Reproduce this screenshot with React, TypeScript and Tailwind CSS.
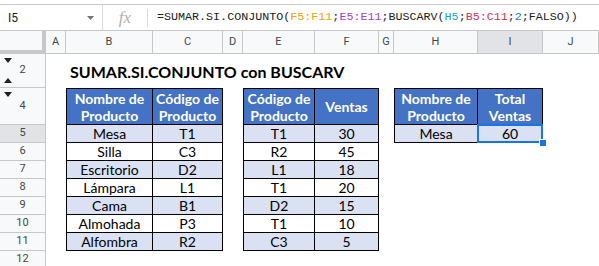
import React from "react";

const colLetters = ["A", "B", "C", "D", "E", "F", "G", "H", "I", "J"];

const t1 = [
  ["Mesa", "T1"],
  ["Silla", "C3"],
  ["Escritorio", "D2"],
  ["Lámpara", "L1"],
  ["Cama", "B1"],
  ["Almohada", "P3"],
  ["Alfombra", "R2"],
];
const t2 = [
  ["T1", "30"],
  ["R2", "45"],
  ["L1", "18"],
  ["T1", "20"],
  ["D2", "15"],
  ["T1", "10"],
  ["C3", "5"],
];

function Down() {
  return (
    <svg width="8" height="5" viewBox="0 0 8 5">
      <path d="M0 0 L8 0 L4 5 Z" fill="#202124" />
    </svg>
  );
}
function Up() {
  return (
    <svg width="8" height="5" viewBox="0 0 8 5">
      <path d="M0 5 L8 5 L4 0 Z" fill="#202124" />
    </svg>
  );
}

function HeaderCell({ children, first }: { children: React.ReactNode; first?: boolean }) {
  return (
    <div
      className={`flex items-center justify-center text-center bg-[#4472c4] text-white font-bold border-t border-r border-b border-black leading-[17px] ${
        first ? "border-l" : ""
      }`}
    >
      {children}
    </div>
  );
}

function DataCell({ children, first, alt }: { children: React.ReactNode; first?: boolean; alt?: boolean }) {
  return (
    <div
      className={`flex items-center justify-center border-r border-b border-black leading-none ${
        alt ? "bg-[#d9e1f2]" : "bg-white"
      } ${first ? "border-l" : ""}`}
    >
      {children}
    </div>
  );
}

export default function App() {
  const rowLabels: { label: string; top?: boolean; bottom?: boolean; sel?: boolean }[] = [
    { label: "2", top: true, bottom: true },
    { label: "4", top: true },
    { label: "5", sel: true },
    { label: "6" },
    { label: "7" },
    { label: "8" },
    { label: "9" },
    { label: "10" },
    { label: "11" },
    { label: "12" },
  ];

  return (
    <div className="w-[599px] h-[266px] overflow-hidden bg-white flex flex-col" style={{ fontFamily: "Roboto, 'Liberation Sans', sans-serif" }}>
      {/* formula bar */}
      <div className="pt-[4px] shrink-0">
        <div className="h-[27px] border-t border-b border-[#c7c7c7] flex items-center">
          <div className="w-[103px] h-full flex items-center justify-between pl-[8px] pr-[8px] border-r border-[#dadce0]">
            <span className="text-[12px] text-[#202124]">I5</span>
            <svg width="7" height="4" viewBox="0 0 7 4">
              <path d="M0 0 L7 0 L3.5 4 Z" fill="#757575" />
            </svg>
          </div>
          <div className="w-[44px] h-full flex items-center justify-center">
            <span className="text-[#b0b0b0] italic text-[17px]" style={{ fontFamily: "'Liberation Serif', serif" }}>
              fx
            </span>
          </div>
          <div className="w-px h-[18px] bg-[#dadce0]" />
          <div
            className="pl-[9px] text-[11.7px] text-[#202124] whitespace-nowrap"
            style={{ fontFamily: "'Liberation Mono', 'DejaVu Sans Mono', monospace" }}
          >
            =SUMAR.SI.CONJUNTO(<span className="text-[#f4a100]">F5:F11</span>;
            <span className="text-[#a142c4]">E5:E11</span>;BUSCARV(
            <span className="text-[#12a5c7]">H5</span>;<span className="text-[#d2305e]">B5:C11</span>;
            <span className="text-[#1a73e8]">2</span>;FALSO))
          </div>
        </div>
      </div>

      {/* sheet grid */}
      <div className="flex-1 grid grid-cols-[46px_20px_87px_70px_20px_72px_64px_15px_84px_65px_1fr] grid-rows-[23px_34px_37px_18px_18px_18px_18px_18px_18px_18px_18px_1fr]">
        {/* corner */}
        <div className="col-start-1 row-start-1 bg-[#f8f9fa] border-r-[4px] border-b-[4px] border-[#c7c7c7]" />
        {colLetters.map((c, i) => (
          <div
            key={c}
            className={`row-start-1 flex items-center justify-center text-[11px] text-[#444746] border-b border-r border-[#c7c7c7] ${
              c === "I" ? "bg-[#e1e3e6]" : "bg-[#f8f9fa]"
            }`}
            style={{ gridColumnStart: i + 2 }}
          >
            {c}
          </div>
        ))}

        {/* row headers */}
        {rowLabels.map((r, i) => (
          <div
            key={r.label}
            className={`col-start-1 relative flex items-center justify-center text-[11px] text-[#444746] border-r border-b border-[#c7c7c7] ${
              r.sel ? "bg-[#e1e3e6]" : "bg-[#f8f9fa]"
            }`}
            style={{ gridRowStart: i + 2 }}
          >
            {r.top && (
              <div className="absolute left-[4px] top-[4px] leading-none flex">
                <Down />
              </div>
            )}
            {r.bottom && (
              <div className="absolute left-[4px] bottom-[4px] leading-none flex">
                <Up />
              </div>
            )}
            {r.label}
          </div>
        ))}

        {/* title */}
        <div
          className="col-start-3 col-end-10 row-start-2 flex items-center pl-[4px] pt-[2px] text-[16px] font-bold text-black whitespace-nowrap"
          style={{ fontFamily: "Lato, 'Liberation Sans', sans-serif" }}
        >
          SUMAR.SI.CONJUNTO con BUSCARV
        </div>

        {/* table 1 */}
        <div
          className="col-start-3 col-end-5 row-start-3 row-end-11 grid grid-cols-[87px_70px] grid-rows-[37px_repeat(7,18px)] text-[14px] text-black"
          style={{ fontFamily: "Lato, 'Liberation Sans', sans-serif" }}
        >
          <HeaderCell first>
            Nombre de
            <br />
            Producto
          </HeaderCell>
          <HeaderCell>
            Código de
            <br />
            Producto
          </HeaderCell>
          {t1.map((r, i) => (
            <React.Fragment key={i}>
              <DataCell first alt={i % 2 === 0}>
                {r[0]}
              </DataCell>
              <DataCell alt={i % 2 === 0}>{r[1]}</DataCell>
            </React.Fragment>
          ))}
        </div>

        {/* table 2 */}
        <div
          className="col-start-6 col-end-8 row-start-3 row-end-11 grid grid-cols-[72px_64px] grid-rows-[37px_repeat(7,18px)] text-[14px] text-black"
          style={{ fontFamily: "Lato, 'Liberation Sans', sans-serif" }}
        >
          <HeaderCell first>
            Código de
            <br />
            Producto
          </HeaderCell>
          <HeaderCell>Ventas</HeaderCell>
          {t2.map((r, i) => (
            <React.Fragment key={i}>
              <DataCell first alt={i % 2 === 0}>
                {r[0]}
              </DataCell>
              <DataCell alt={i % 2 === 0}>{r[1]}</DataCell>
            </React.Fragment>
          ))}
        </div>

        {/* table 3 */}
        <div
          className="col-start-9 col-end-11 row-start-3 row-end-5 grid grid-cols-[84px_65px] grid-rows-[37px_18px] text-[14px] text-black"
          style={{ fontFamily: "Lato, 'Liberation Sans', sans-serif" }}
        >
          <HeaderCell first>
            Nombre de
            <br />
            Producto
          </HeaderCell>
          <HeaderCell>
            Total
            <br />
            Ventas
          </HeaderCell>
          <DataCell first alt>
            Mesa
          </DataCell>
          <div className="relative flex items-center justify-center bg-[#d9e1f2] border-r border-b border-black">
            60
            <div className="absolute inset-[-1px] border-2 border-[#1a73e8]" />
            <div className="absolute right-[-5px] bottom-[-5px] w-[8px] h-[8px] bg-[#1a73e8] border border-white" />
          </div>
        </div>
      </div>
    </div>
  );
}
